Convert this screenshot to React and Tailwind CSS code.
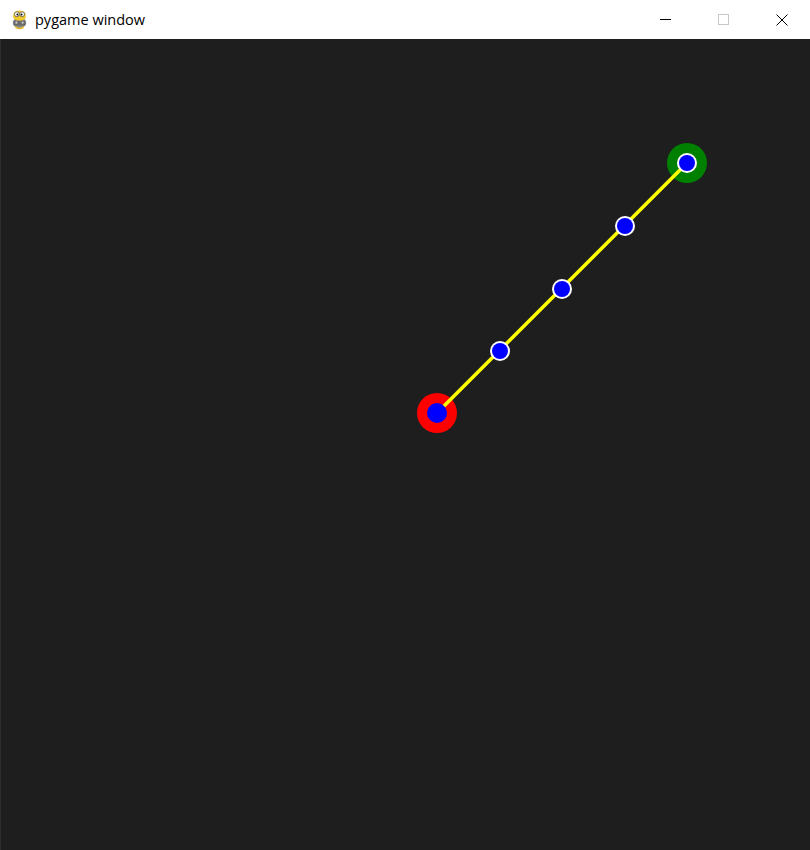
import React from 'react';

const joints = [
  [500, 351],
  [562, 289],
  [625, 226],
  [687, 163],
];

function PygameIcon() {
  return (
    <svg width="19" height="21" viewBox="0 0 18 20">
      <ellipse cx="9" cy="13" rx="6.5" ry="5" fill="#8a8a8a" />
      <rect x="3.5" y="11" width="11" height="5" rx="1" fill="#6b6b6b" />
      <circle cx="6" cy="13" r="1" fill="#d0d0d0" />
      <circle cx="12" cy="13" r="1" fill="#d0d0d0" />
      <path d="M3 8 Q2 1.5 9 1.5 Q16 1.5 15 8 Q14 11 9 11 Q4 11 3 8Z" fill="#f2c92a" />
      <circle cx="6.5" cy="5" r="2.3" fill="#fff" stroke="#333" strokeWidth="0.6" />
      <circle cx="11.5" cy="5" r="2.3" fill="#fff" stroke="#333" strokeWidth="0.6" />
      <circle cx="7" cy="5.3" r="0.9" fill="#000" />
      <circle cx="11" cy="5.3" r="0.9" fill="#000" />
      <path d="M5 16 Q9 20 13 16 L13 18 Q9 20.5 5 18Z" fill="#e0b820" />
    </svg>
  );
}

export default function App() {
  return (
    <div className="w-[810px] h-[850px] flex flex-col bg-white" style={{ fontFamily: '"Segoe UI", "Open Sans", "Noto Sans", sans-serif' }}>
      {/* title bar */}
      <div className="h-[39px] flex items-center bg-white">
        <div className="pl-[10px] pr-[6px] flex items-center">
          <PygameIcon />
        </div>
        <span className="text-[14.5px] text-black leading-none mt-[1px]">pygame window</span>
        <div className="ml-auto flex h-full">
          <div className="w-[54px] flex items-center justify-center">
            <div className="w-[11px] h-px bg-black" />
          </div>
          <div className="w-[62px] flex items-center justify-center">
            <div className="w-[11px] h-[11px] border border-[#c7c7c7]" />
          </div>
          <div className="w-[56px] flex items-center justify-center">
            <svg width="12" height="12" viewBox="0 0 12 12">
              <path d="M0.5 0.5 L11.5 11.5 M11.5 0.5 L0.5 11.5" stroke="#000" strokeWidth="1" />
            </svg>
          </div>
        </div>
      </div>

      {/* canvas */}
      <div className="flex-1 flex bg-[#1e1e1e] border-l border-[#2e2e2e]">
        <svg className="flex-1 block" viewBox="1 39 809 811" width="809" height="811">
          <circle cx="437" cy="413" r="20" fill="#ff0000" />
          <circle cx="687" cy="163" r="20" fill="#008000" />
          <line x1="437" y1="413" x2="687" y2="163" stroke="#ffff00" strokeWidth="3.5" />
          <circle cx="437" cy="413" r="10" fill="#0000ff" />
          {joints.map(([x, y], i) => (
            <g key={i}>
              <circle cx={x} cy={y} r="10" fill="#ffffff" />
              <circle cx={x} cy={y} r="8" fill="#0000ff" />
            </g>
          ))}
        </svg>
      </div>
    </div>
  );
}
